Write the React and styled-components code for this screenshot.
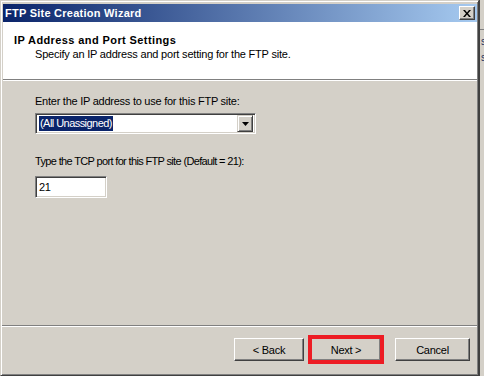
import styled, { createGlobalStyle } from "styled-components";

const GlobalStyle = createGlobalStyle`
  html, body {
    margin: 0;
    padding: 0;
    width: 484px;
    height: 376px;
    overflow: hidden;
    background: #d4d0c8;
    font-family: "Liberation Sans", Arial, sans-serif;
    font-size: 11px;
    letter-spacing: -0.25px;
    color: #000;
  }
`;

export default function App() {
  return (
    <>
      <GlobalStyle />
      <Desktop>
        <Window>
          <TitleBar>
            <Caption>FTP Site Creation Wizard</Caption>
            <CloseButton aria-label="Close">
              <svg width="8" height="7" viewBox="0 0 8 7">
                <path d="M0 0h2l2 2.5L6 0h2L5 3.5 8 7H6L4 4.5 2 7H0l3-3.5z" fill="#000" />
              </svg>
            </CloseButton>
          </TitleBar>
          <Header>
            <HeaderTitle>IP Address and Port Settings</HeaderTitle>
            <HeaderText>Specify an IP address and port setting for the FTP site.</HeaderText>
          </Header>
          <Content>
            <Field>
              <Label>Enter the IP address to use for this FTP site:</Label>
              <Combo>
                <ComboValue>
                  <Selected>(All Unassigned)</Selected>
                </ComboValue>
                <DropButton>
                  <svg width="7" height="4" viewBox="0 0 7 4">
                    <path d="M0 0h7L3.5 4z" fill="#000" />
                  </svg>
                </DropButton>
              </Combo>
            </Field>
            <Field>
              <Label $tight>Type the TCP port for this FTP site (Default = 21):</Label>
              <TextBox>21</TextBox>
            </Field>
          </Content>
          <Footer>
            <Button>&lt; Back</Button>
            <Button $highlight>Next &gt;</Button>
            <Button $wide $gap>Cancel</Button>
          </Footer>
        </Window>
        <Behind>
          <Rule />
          <BehindText>s</BehindText>
          <BehindText>s</BehindText>
        </Behind>
      </Desktop>
    </>
  );
}

const Desktop = styled.div`
  display: flex;
  width: 484px;
  height: 376px;
`;

const Window = styled.div`
  width: 479px;
  height: 376px;
  box-sizing: border-box;
  display: flex;
  flex-direction: column;
  padding: 3px 1px 1px 1px;
  border: 1px solid;
  border-color: #d4d0c8 #404040 #404040 #d4d0c8;
  box-shadow: inset 1px 1px #fff, inset -1px -1px #808080;
  background: #d4d0c8;
`;

const TitleBar = styled.div`
  height: 18px;
  flex-shrink: 0;
  display: flex;
  align-items: center;
  justify-content: space-between;
  padding: 0 2px 0 2px;
  margin-left: 1px;
  background: linear-gradient(to right, #0a246a, #a6caf0);
`;

const Caption = styled.span`
  color: #fff;
  font-weight: bold;
  letter-spacing: 0.25px;
`;

const CloseButton = styled.div`
  width: 16px;
  height: 14px;
  box-sizing: border-box;
  display: flex;
  align-items: center;
  justify-content: center;
  background: #d4d0c8;
  border: 1px solid;
  border-color: #fff #404040 #404040 #fff;
  box-shadow: inset -1px -1px #808080;
`;

const Header = styled.div`
  height: 58px;
  flex-shrink: 0;
  background: #fff;
  padding: 11px 0 0 11px;
  box-sizing: border-box;
  border-bottom: 1px solid #808080;
  box-shadow: 0 1px #fff;
  margin-left: 1px;
`;

const HeaderTitle = styled.div`
  font-weight: bold;
  line-height: 14px;
  letter-spacing: 0.4px;
`;

const HeaderText = styled.div`
  margin: 1px 0 0 21px;
  line-height: 13px;
  letter-spacing: -0.2px;
`;

const Content = styled.div`
  flex: 1;
  padding: 15px 0 0 33px;
  display: flex;
  flex-direction: column;
  gap: 21px;
  border-bottom: 1px solid #808080;
  box-shadow: 0 1px #fff;
`;

const Field = styled.div`
  display: flex;
  flex-direction: column;
  gap: 5px;
`;

const Label = styled.div`
  line-height: 13px;
  letter-spacing: ${(p) => (p.$tight ? "-0.65px" : "-0.25px")};
`;

const Sunken = styled.div`
  box-sizing: border-box;
  background: #fff;
  border: 1px solid;
  border-color: #808080 #fff #fff #808080;
  box-shadow: inset 1px 1px #404040, inset -1px -1px #d4d0c8;
`;

const Combo = styled(Sunken)`
  width: 221px;
  height: 21px;
  display: flex;
  align-items: center;
  padding: 2px;
`;

const ComboValue = styled.div`
  flex: 1;
  display: flex;
  align-items: center;
  padding-left: 1px;
`;

const Selected = styled.span`
  background: #0a246a;
  color: #fff;
  line-height: 15px;
  padding: 0 1px;
  letter-spacing: -0.55px;
`;

const DropButton = styled.div`
  width: 16px;
  height: 17px;
  box-sizing: border-box;
  display: flex;
  align-items: center;
  justify-content: center;
  background: #d4d0c8;
  border: 1px solid;
  border-color: #d4d0c8 #404040 #404040 #d4d0c8;
  box-shadow: inset 1px 1px #fff, inset -1px -1px #808080;
`;

const TextBox = styled(Sunken)`
  width: 72px;
  height: 22px;
  padding: 3px 0 0 3px;
  margin-top: 3px;
  line-height: 14px;
`;

const Footer = styled.div`
  height: 48px;
  flex-shrink: 0;
  display: flex;
  align-items: center;
  justify-content: flex-end;
  gap: 7px;
  padding: 0 7px 1px 0;
  box-sizing: border-box;
`;

const Button = styled.div`
  width: ${(p) => (p.$wide ? "75px" : "70px")};
  height: 23px;
  box-sizing: border-box;
  display: flex;
  align-items: center;
  justify-content: center;
  margin-left: ${(p) => (p.$gap ? "7px" : "0")};
  border: 1px solid;
  border-color: #fff #404040 #404040 #fff;
  box-shadow: inset -1px -1px #808080;
  outline: ${(p) => (p.$highlight ? "4px solid #ed1c24" : "none")};
  outline-offset: -1px;
`;

const Behind = styled.div`
  flex: 1;
  display: flex;
  flex-direction: column;
  border-left: 1px solid #404040;
  padding: 29px 0 0 0;
  overflow: hidden;
  background: #d4d0c8;
  color: #203060;
  line-height: 12px;
`;

const Rule = styled.div`
  height: 1px;
  background: #808080;
  margin-bottom: 6px;
`;

const BehindText = styled.div`
  font-size: 10px;
  padding-left: 1px;
  margin-bottom: 4px;
`;
